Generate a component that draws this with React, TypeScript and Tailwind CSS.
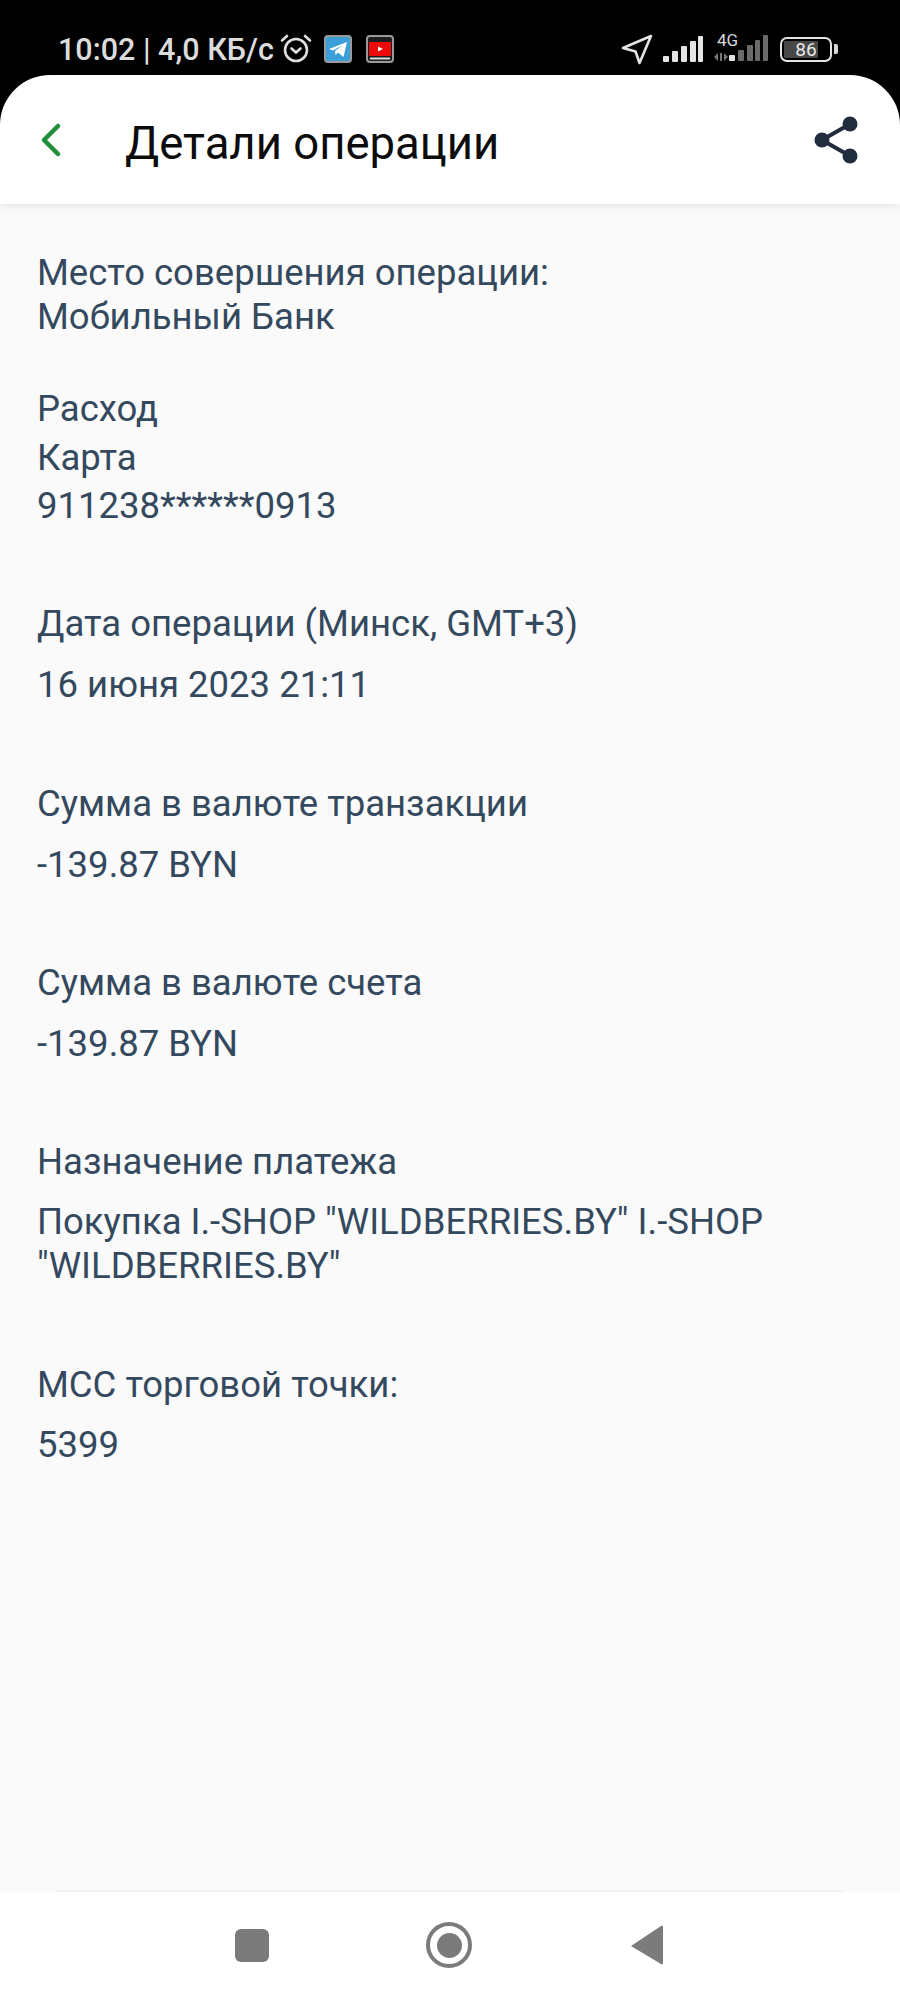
const Label = ({ children, className = "" }: { children: React.ReactNode; className?: string }) => (
  <div className={"whitespace-pre-line " + className}>{children}</div>
);

function StatusBar() {
  return (
    <div className="h-[75px] bg-black flex items-start justify-between pl-[58px] pr-[62px] pt-[33px] text-[#dcdcdc]">
      <div className="flex items-center h-[32px]">
        <span className="text-[30.5px] leading-[32px] font-medium mt-[2px]">10:02 | 4,0 КБ/с</span>
        <svg width="32" height="32" viewBox="0 0 32 32" fill="none" stroke="#e0e0e0" strokeWidth="2.6" strokeLinecap="round" className="ml-[6px]">
          <circle cx="16" cy="17" r="11" />
          <path d="M11.5 15.5l4.5 4 4.5-4" />
          <path d="M2 7.5L7 3M30 7.5L25 3" />
        </svg>
        <svg width="28" height="28" viewBox="0 0 28 28" className="ml-[12px]">
          <rect x="1" y="1" width="26" height="26" rx="3" fill="#3b9fd8" stroke="#9a9a9a" strokeWidth="2" />
          <path d="M5 14L23 7L19.5 22L14 17.5L11.5 20L11 16L19 10L9 15.5Z" fill="#ffffff" />
        </svg>
        <svg width="28" height="28" viewBox="0 0 28 28" className="ml-[14px]">
          <rect x="1" y="1" width="26" height="26" rx="3" fill="#1c1c1c" stroke="#9a9a9a" strokeWidth="2" />
          <rect x="3" y="7" width="22" height="14" rx="1" fill="#ee0a0a" />
          <path d="M12 11.5L17 14L12 16.5Z" fill="#ffffff" />
          <path d="M4 23.5H24" stroke="#d8d8d8" strokeWidth="2" />
        </svg>
      </div>
      <div className="flex items-center h-[32px]">
        <svg width="32" height="32" viewBox="0 0 32 32" fill="none" stroke="#e4e4e4" strokeWidth="2.6" strokeLinejoin="round">
          <path d="M2 15L30 3L18.5 30L14.5 18.5Z" />
        </svg>
        <svg width="42" height="28" viewBox="0 0 42 28" fill="#e4e4e4" className="ml-[9px]">
          <rect x="1" y="21" width="6" height="6" rx="1" />
          <rect x="10" y="16" width="6" height="11" rx="1" />
          <rect x="19" y="11" width="6" height="16" rx="1" />
          <rect x="28" y="6" width="6" height="21" rx="1" />
          <rect x="36" y="1" width="5" height="26" rx="1" />
        </svg>
        <div className="relative w-[55px] h-[32px] ml-[10px]">
          <span className="absolute left-[3px] top-[-3px] text-[17px] leading-[20px] text-[#d8d8d8]">4G</span>
          <svg width="55" height="32" viewBox="0 0 55 32" className="absolute left-0 top-0">
            <path d="M0 24L4 20V28ZM10 20L14 24L10 28ZM6 20H8V28H6Z" fill="#777777" />
            <rect x="15" y="22" width="6" height="6" rx="1" fill="#e4e4e4" />
            <rect x="24" y="17" width="6" height="11" rx="1" fill="#6a6a6a" />
            <rect x="33" y="12" width="6" height="16" rx="1" fill="#6a6a6a" />
            <rect x="41" y="7" width="5" height="21" rx="1" fill="#6a6a6a" />
            <rect x="49" y="2" width="5" height="26" rx="1" fill="#6a6a6a" />
          </svg>
        </div>
        <div className="relative ml-[11px] w-[52px] h-[25px] border-[2.5px] border-[#e4e4e4] rounded-[7px] flex items-stretch p-[2px]">
          <div className="w-[34px] h-full bg-[#484848] rounded-[1px]" />
          <span className="absolute inset-0 flex items-center justify-center text-[19px] leading-none text-[#e8e8e8]">86</span>
        </div>
        <div className="ml-[2px] w-[4px] h-[10px] bg-[#d8d8d8] rounded-r-[2px]" />
      </div>
    </div>
  );
}

function Header() {
  return (
    <div className="relative h-[129px] rounded-t-[50px] bg-white flex items-center shadow-[0_2px_8px_rgba(0,0,0,0.09)] -mb-[1px] z-10">
      <svg width="22" height="36" viewBox="0 0 22 36" fill="none" stroke="#1f8f3a" strokeWidth="4.5" strokeLinecap="round" strokeLinejoin="round" className="ml-[40px]">
        <path d="M18 4L4 18L18 32" />
      </svg>
      <div className="ml-[63px] mt-[8px] text-[45.5px] leading-[52px] text-[#0c0c0c]">Детали операции</div>
      <svg width="46" height="52" viewBox="0 0 46 52" fill="#1f2d3d" stroke="#1f2d3d" className="absolute left-[814px] top-[39px]">
        <path d="M36 10L8 26L36 42" fill="none" strokeWidth="4" />
        <circle cx="36" cy="10" r="7.5" stroke="none" />
        <circle cx="8" cy="26" r="7.5" stroke="none" />
        <circle cx="36" cy="42" r="7.5" stroke="none" />
      </svg>
    </div>
  );
}

function NavBar() {
  return (
    <div className="h-[108px] bg-white relative flex items-center">
      <div className="absolute left-[56px] right-[56px] top-[-2px] h-[2px] bg-[#f1f2f3]" />
      <div className="w-full flex items-center pl-[235px] mt-[-2px]">
        <div className="w-[34px] h-[33px] rounded-[6px] bg-[#7b7b7b]" />
        <div className="ml-[157px] w-[46px] h-[46px] rounded-full border-[4px] border-[#7b7b7b] flex items-center justify-center">
          <div className="w-[25px] h-[25px] rounded-full bg-[#7b7b7b]" />
        </div>
        <svg width="34" height="40" viewBox="0 0 34 40" fill="#7b7b7b" className="ml-[158px]">
          <path d="M1 21L31 1C32.5 0.5 33 1 33 2V38C33 39.5 32 39.8 31 39L1 21Z" />
        </svg>
      </div>
    </div>
  );
}

export default function App() {
  return (
    <div className="w-[900px] h-[2000px] flex flex-col bg-black font-['Roboto',sans-serif] overflow-hidden">
      <StatusBar />
      <Header />
      <main className="flex-1 bg-[#fafafa] px-[37px] pt-[48px] text-[36.5px] leading-[44px] text-[#34495e]">
        <Label>Место совершения операции:{"\n"}Мобильный Банк</Label>
        <div className="mt-[46px] leading-[48.5px]">
          <div>Расход</div>
          <div>Карта</div>
          <div>911238******0913</div>
        </div>
        <div className="mt-[71px]">Дата операции (Минск, GMT+3)</div>
        <div className="mt-[17px]">16 июня 2023 21:11</div>
        <div className="mt-[75px]">Сумма в валюте транзакции</div>
        <div className="mt-[17px]">-139.87 BYN</div>
        <div className="mt-[74px]">Сумма в валюте счета</div>
        <div className="mt-[17px]">-139.87 BYN</div>
        <div className="mt-[74px]">Назначение платежа</div>
        <div className="mt-[16px] w-[800px]">Покупка I.-SHOP "WILDBERRIES.BY" I.-SHOP "WILDBERRIES.BY"</div>
        <div className="mt-[75px]">MCC торговой точки:</div>
        <div className="mt-[16px]">5399</div>
      </main>
      <NavBar />
    </div>
  );
}
